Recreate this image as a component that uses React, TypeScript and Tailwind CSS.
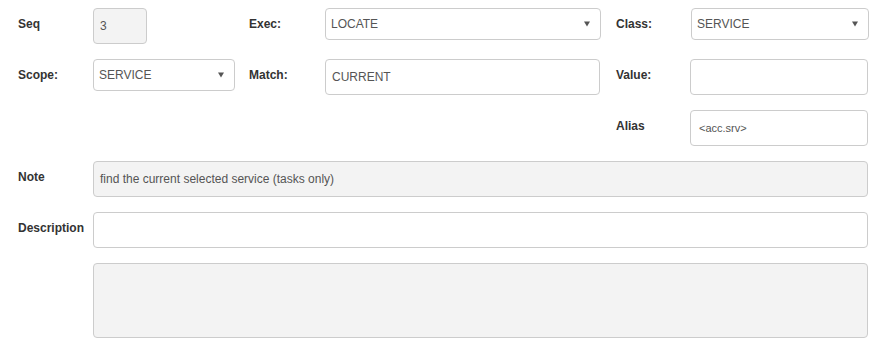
import React from "react";

const font = { fontFamily: '"Liberation Sans", Arial, sans-serif' };

function Caret() {
  return (
    <svg width="8" height="6" viewBox="0 0 8 6" className="shrink-0">
      <path d="M1 0.5 L7 0.5 L4 5.5 Z" fill="#555" />
    </svg>
  );
}

function Label({ children, w }: { children: React.ReactNode; w: string }) {
  return (
    <div className={`${w} shrink-0 pt-[8px] text-[12px] leading-[17px] font-bold text-[#333]`}>{children}</div>
  );
}

function Select({ value, w }: { value: string; w: string }) {
  return (
    <div className={`${w} h-[32px] shrink-0 flex items-center justify-between pl-[5px] pr-[9px] border border-[#ccc] rounded-[4px] bg-white text-[12px] text-[#555]`}>
      <span>{value}</span>
      <Caret />
    </div>
  );
}

function Input({ value, w, gray, small }: { value?: string; w: string; gray?: boolean; small?: boolean }) {
  return (
    <div
      className={`${w} h-[36px] shrink-0 flex items-center border border-[#ccc] rounded-[4px] ${gray ? "bg-[#f3f3f3]" : "bg-white"} ${small ? "text-[11px] pl-[8px]" : "text-[12px] pl-[6px]"} text-[#555]`}
    >
      {value}
    </div>
  );
}

export default function App() {
  return (
    <div className="w-[884px] h-[345px] bg-white pt-[8px] pl-[18px] pr-[14px]" style={font}>
      {/* Row 1 */}
      <div className="flex items-start h-[36px] mb-[15px]">
        <div className="w-[231px] shrink-0 flex items-start">
          <Label w="w-[75px]">Seq</Label>
          <Input value="3" w="w-[54px]" gray />
        </div>
        <div className="w-[367px] shrink-0 flex items-start">
          <Label w="w-[76px]">Exec:</Label>
          <Select value="LOCATE" w="w-[276px]" />
        </div>
        <div className="flex-1 flex items-start">
          <Label w="w-[75px]">Class:</Label>
          <Select value="SERVICE" w="w-[178px]" />
        </div>
      </div>
      {/* Row 2 */}
      <div className="flex items-start h-[36px] mb-[15px]">
        <div className="w-[231px] shrink-0 flex items-start">
          <Label w="w-[75px]">Scope:</Label>
          <Select value="SERVICE" w="w-[142px]" />
        </div>
        <div className="w-[367px] shrink-0 flex items-start">
          <Label w="w-[76px]">Match:</Label>
          <Input value="CURRENT" w="w-[275px]" />
        </div>
        <div className="flex-1 flex items-start">
          <Label w="w-[74px]">Value:</Label>
          <Input w="w-[178px]" />
        </div>
      </div>
      {/* Row 3 */}
      <div className="flex items-start h-[36px] mb-[15px]">
        <div className="w-[598px] shrink-0" />
        <div className="flex-1 flex items-start">
          <Label w="w-[74px]">Alias</Label>
          <Input value="<acc.srv>" w="w-[178px]" small />
        </div>
      </div>
      {/* Note */}
      <div className="flex items-start h-[36px] mb-[15px]">
        <Label w="w-[75px]">Note</Label>
        <Input value="find the current selected service (tasks only)" w="w-[775px]" gray />
      </div>
      {/* Description */}
      <div className="flex items-start h-[36px] mb-[15px]">
        <Label w="w-[75px]">Description</Label>
        <Input w="w-[775px]" />
      </div>
      {/* Textarea */}
      <div className="flex items-start">
        <div className="w-[75px] shrink-0" />
        <div className="w-[775px] h-[75px] border border-[#ccc] rounded-[4px] bg-[#f3f3f3]" />
      </div>
    </div>
  );
}
